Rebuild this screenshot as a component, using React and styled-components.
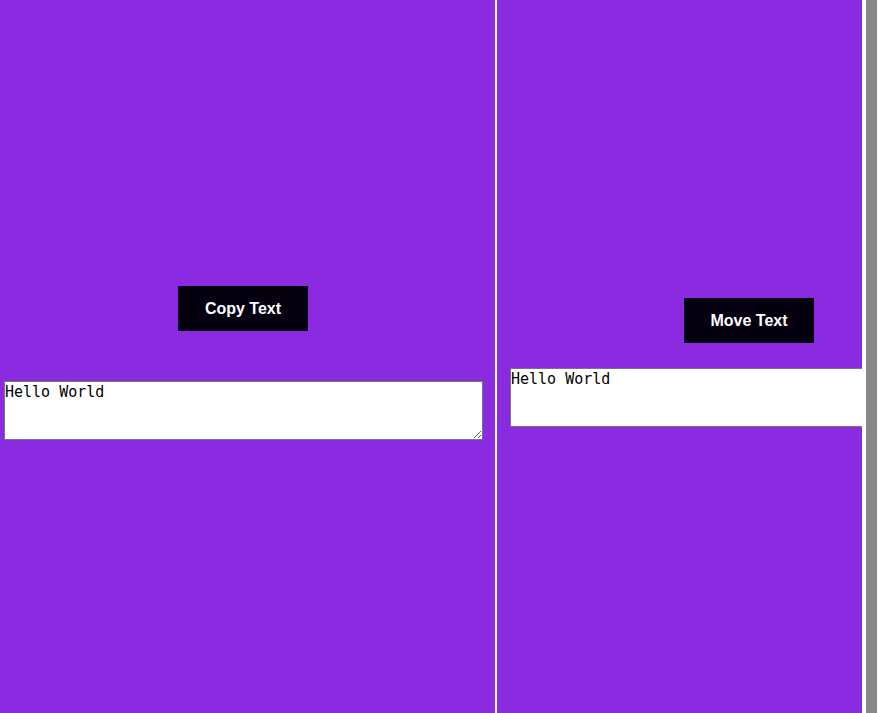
import React from 'react';
import styled, { createGlobalStyle } from 'styled-components';

const Global = createGlobalStyle`
  html, body {
    margin: 0;
    padding: 0;
    background: #fff;
  }
`;

const Page = styled.div`
  display: flex;
  height: 713px;
  overflow: hidden;
  background: #fff;
`;

const Panel = styled.div`
  flex: none;
  width: ${(p) => p.width}px;
  margin-right: ${(p) => p.gap}px;
  height: 100%;
  background: #8a2be2;
  overflow: hidden;
  display: flex;
  flex-direction: column;
  align-items: flex-start;
  padding-top: ${(p) => p.top}px;
  box-sizing: border-box;
`;

const Button = styled.button`
  height: 45px;
  width: 130px;
  margin-left: ${(p) => p.offset}px;
  border: none;
  background: #05000f;
  color: #fff;
  font-family: 'Liberation Sans', Arial, sans-serif;
  font-weight: bold;
  font-size: 16px;
  cursor: pointer;
`;

const Field = styled.textarea`
  flex: none;
  box-sizing: border-box;
  width: ${(p) => p.w}px;
  height: 59px;
  margin-top: ${(p) => p.space}px;
  margin-left: ${(p) => p.offset}px;
  padding: 1px 0;
  border: 1px solid #767676;
  background: #fff;
  color: #000;
  font-family: 'DejaVu Sans Mono', monospace;
  font-size: 15px;
  resize: ${(p) => (p.fixed ? 'none' : 'both')};
`;

const Rail = styled.div`
  flex: none;
  width: 11px;
  margin-left: 4px;
  height: 100%;
  background: #888;
`;

export default function App() {
  return (
    <>
      <Global />
      <Page>
        <Panel width={495} gap={2} top={286}>
          <Button offset={178}>Copy Text</Button>
          <Field w={479} space={50} offset={4} defaultValue="Hello World" />
        </Panel>
        <Panel width={365} gap={0} top={298}>
          <Button offset={187}>Move Text</Button>
          <Field w={380} space={25} offset={13} fixed defaultValue="Hello World" />
        </Panel>
        <Rail />
      </Page>
    </>
  );
}
